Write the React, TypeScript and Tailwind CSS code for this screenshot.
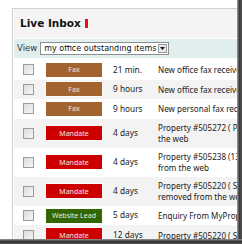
import React from "react";

type Row = { kind: "Fax" | "Mandate" | "Website Lead"; time: string; lines: string[] };

const rows: Row[] = [
  { kind: "Fax", time: "21 min.", lines: ["New office fax received"] },
  { kind: "Fax", time: "9 hours", lines: ["New office fax received"] },
  { kind: "Fax", time: "9 hours", lines: ["New personal fax received"] },
  { kind: "Mandate", time: "4 days", lines: ["Property #505272 ( Park", "the web"] },
  { kind: "Mandate", time: "4 days", lines: ["Property #505238 (13", "from the web"] },
  { kind: "Mandate", time: "4 days", lines: ["Property #505220 ( Sandton", "removed from the web"] },
  { kind: "Website Lead", time: "5 days", lines: ["Enquiry From MyProperty"] },
  { kind: "Mandate", time: "12 days", lines: ["Property #505220 ( Sandton"] },
];

function Badge({ kind }: { kind: Row["kind"] }) {
  const cls =
    kind === "Fax"
      ? "bg-[#a3632e] text-[#f3e6da]"
      : kind === "Mandate"
      ? "bg-[#cc0000] text-[#fbe3e3]"
      : "bg-[#336600] text-[#e6eedd]";
  return (
    <div
      className={`w-[56px] h-[14px] shrink-0 flex items-center justify-center text-[7px] leading-none outline outline-1 outline-white/60 ${cls}`}
    >
      {kind}
    </div>
  );
}

function Check() {
  return (
    <div className="w-[11px] h-[11px] shrink-0 border border-[#9c9c9c] bg-gradient-to-br from-[#dcdcdc] to-[#f7f7f7]" />
  );
}

export default function App() {
  return (
    <div className="w-[242px] h-[244px] bg-white flex flex-col overflow-hidden">
      <div className="flex flex-1 min-h-0">
        <div className="flex-1 min-w-0 pl-[12px] pt-[8px]">
          <div className="h-full border-l border-t border-[#cfcfcf] pl-[1px] overflow-hidden" style={{ fontFamily: '"DejaVu Sans", sans-serif' }}>
            <div className="h-[29px] bg-[#f4f4f4] flex items-center pl-[6px]">
              <span className="text-[10.5px] font-bold text-[#111] leading-none">Live Inbox</span>
              <span className="ml-[4px] w-[3px] h-[9px] bg-[#e8101c]" />
            </div>
            <div className="h-[1px] bg-white" />
            <div className="h-[19px] bg-[#e1eeee] flex items-center pl-[3px]">
              <span className="text-[8.5px] text-[#333] leading-none">View</span>
              <div className="ml-[3px] w-[129px] h-[13px] bg-white border border-[#8f8f8f] flex items-center">
                <span className="pl-[3px] flex-1 text-[8px] leading-none text-[#111] whitespace-nowrap overflow-hidden">
                  my office outstanding items
                </span>
                <div className="w-[9px] h-[9px] mr-[1px] border border-[#9a9a9a] bg-[#e8e8e8] flex items-center justify-center">
                  <svg width="5" height="3" viewBox="0 0 5 3">
                    <path d="M0 0H5L2.5 3Z" fill="#111" />
                  </svg>
                </div>
              </div>
            </div>
            <div className="h-[2px] bg-white" />
            <div style={{ fontFamily: '"Noto Sans", "Open Sans", sans-serif' }}>
              {rows.map((r, i) => (
                <div
                  key={i}
                  className={`flex items-center pl-[9px] ${r.lines.length > 1 ? "h-[29px]" : "h-[19.6px]"} ${
                    i % 2 === 1 ? "bg-[#f3f3f3]" : "bg-white"
                  }`}
                >
                  <Check />
                  <div className="ml-[12px]">
                    <Badge kind={r.kind} />
                  </div>
                  <div className="w-[45px] shrink-0 pl-[11px] text-[8.3px] text-[#222] whitespace-nowrap leading-none box-content">
                    {r.time}
                  </div>
                  <div className="flex-1 min-w-0 overflow-hidden text-[8.1px] leading-[11px] text-[#222]">
                    {r.lines.map((l, j) => (
                      <div key={j} className="whitespace-nowrap">
                        {l}
                      </div>
                    ))}
                  </div>
                </div>
              ))}
            </div>
          </div>
        </div>
        <div className="w-[5px] shrink-0 bg-gradient-to-r from-[#a0a0a0] via-[#3a3a3a] to-[#555]" />
      </div>
      <div className="h-[5px] shrink-0 bg-gradient-to-b from-[#9a9a9a] via-[#333] to-[#555]" />
    </div>
  );
}
